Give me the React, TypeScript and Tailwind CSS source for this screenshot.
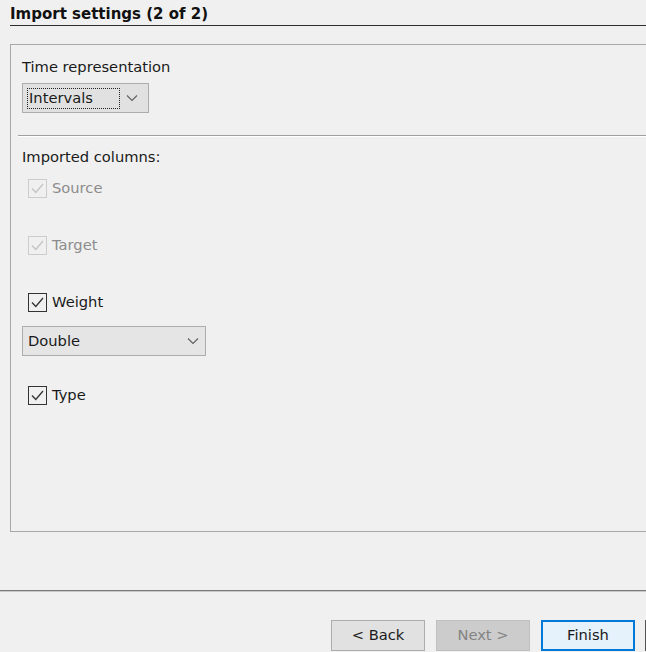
import React from "react";

const font = { fontFamily: "Tahoma, 'DejaVu Sans', sans-serif" };

function Chevron() {
  return (
    <svg width="12" height="8" viewBox="0 0 12 8" className="block">
      <path d="M1 1.5 L6 6.5 L11 1.5" fill="none" stroke="#606060" strokeWidth="1.1" />
    </svg>
  );
}

function Check({ disabled }: { disabled?: boolean }) {
  const c = disabled ? "#c4c4c4" : "#333333";
  return (
    <div
      className={
        "w-[19px] h-[19px] border flex items-center justify-center bg-transparent " +
        (disabled ? "border-[#cccccc]" : "border-[#333333]")
      }
    >
      <svg width="15" height="15" viewBox="0 0 15 15">
        <path d="M2 7.5 L5.8 11.5 L13 3" fill="none" stroke={c} strokeWidth="1.3" />
      </svg>
    </div>
  );
}

export default function App() {
  return (
    <div
      className="w-[646px] h-[652px] bg-[#f0f0f0] overflow-hidden flex flex-col text-[14.7px] text-[#1a1a1a]"
      style={font}
    >
      <div className="ml-[10px] h-[26px] border-b border-[#2e2e2e] flex items-end pb-[3px]">
        <span className="font-bold text-[15px] leading-none text-[#111]">Import settings (2 of 2)</span>
      </div>
      <div className="ml-[10px] mt-[18px] w-[660px] h-[488px] shrink-0 border-l border-t border-b border-[#a8a8a8] pl-[11px] pt-[13px] flex flex-col">
        <div className="leading-[18px]">Time representation</div>
        <div className="mt-[7px] w-[127px] h-[30px] bg-[#e1e1e1] border border-[#adadad] flex items-center pl-[4px] pr-[10px]">
          <div className="w-[93px] h-[21px] border border-dotted border-[#222] flex items-center pl-[1px] leading-none">
            Intervals
          </div>
          <div className="ml-auto">
            <Chevron />
          </div>
        </div>
        <div className="mt-[22px] border-t border-[#a0a0a0] border-b border-b-white -ml-[4px]" />
        <div className="mt-[11px] leading-[18px]">Imported columns:</div>
        <div className="mt-[13px] ml-[6px] flex items-center gap-[5px] text-[#8c8c8c] h-[19px]">
          <Check disabled />
          <span>Source</span>
        </div>
        <div className="mt-[38px] ml-[6px] flex items-center gap-[5px] text-[#8c8c8c] h-[19px]">
          <Check disabled />
          <span>Target</span>
        </div>
        <div className="mt-[38px] ml-[6px] flex items-center gap-[5px] h-[19px]">
          <Check />
          <span>Weight</span>
        </div>
        <div className="mt-[14px] w-[184px] h-[30px] bg-[#e5e5e5] border border-[#adadad] flex items-center pl-[5px] pr-[6px]">
          <span>Double</span>
          <div className="ml-auto">
            <Chevron />
          </div>
        </div>
        <div className="mt-[30px] ml-[6px] flex items-center gap-[5px] h-[19px]">
          <Check />
          <span>Type</span>
        </div>
      </div>
      <div className="mt-[58px] h-[2px] bg-[#7a7a7a] border-b border-[#c8c8c8] shrink-0" />
      <div className="mt-[28px] flex gap-[11px] pl-[331px] shrink-0">
        <button className="w-[94px] h-[31px] shrink-0 bg-[#e1e1e1] border border-[#adadad] text-[#1a1a1a]">
          &lt; Back
        </button>
        <button className="w-[94px] h-[31px] shrink-0 bg-[#cccccc] border border-[#bfbfbf] text-[#838383]">
          Next &gt;
        </button>
        <button className="w-[94px] h-[31px] shrink-0 bg-[#e5f1fb] border-2 border-[#0078d7] text-[#1a1a1a]">
          Finish
        </button>
        <div className="w-[94px] h-[31px] shrink-0 bg-[#e1e1e1] border border-[#555] -ml-[1px]" />
      </div>
    </div>
  );
}
